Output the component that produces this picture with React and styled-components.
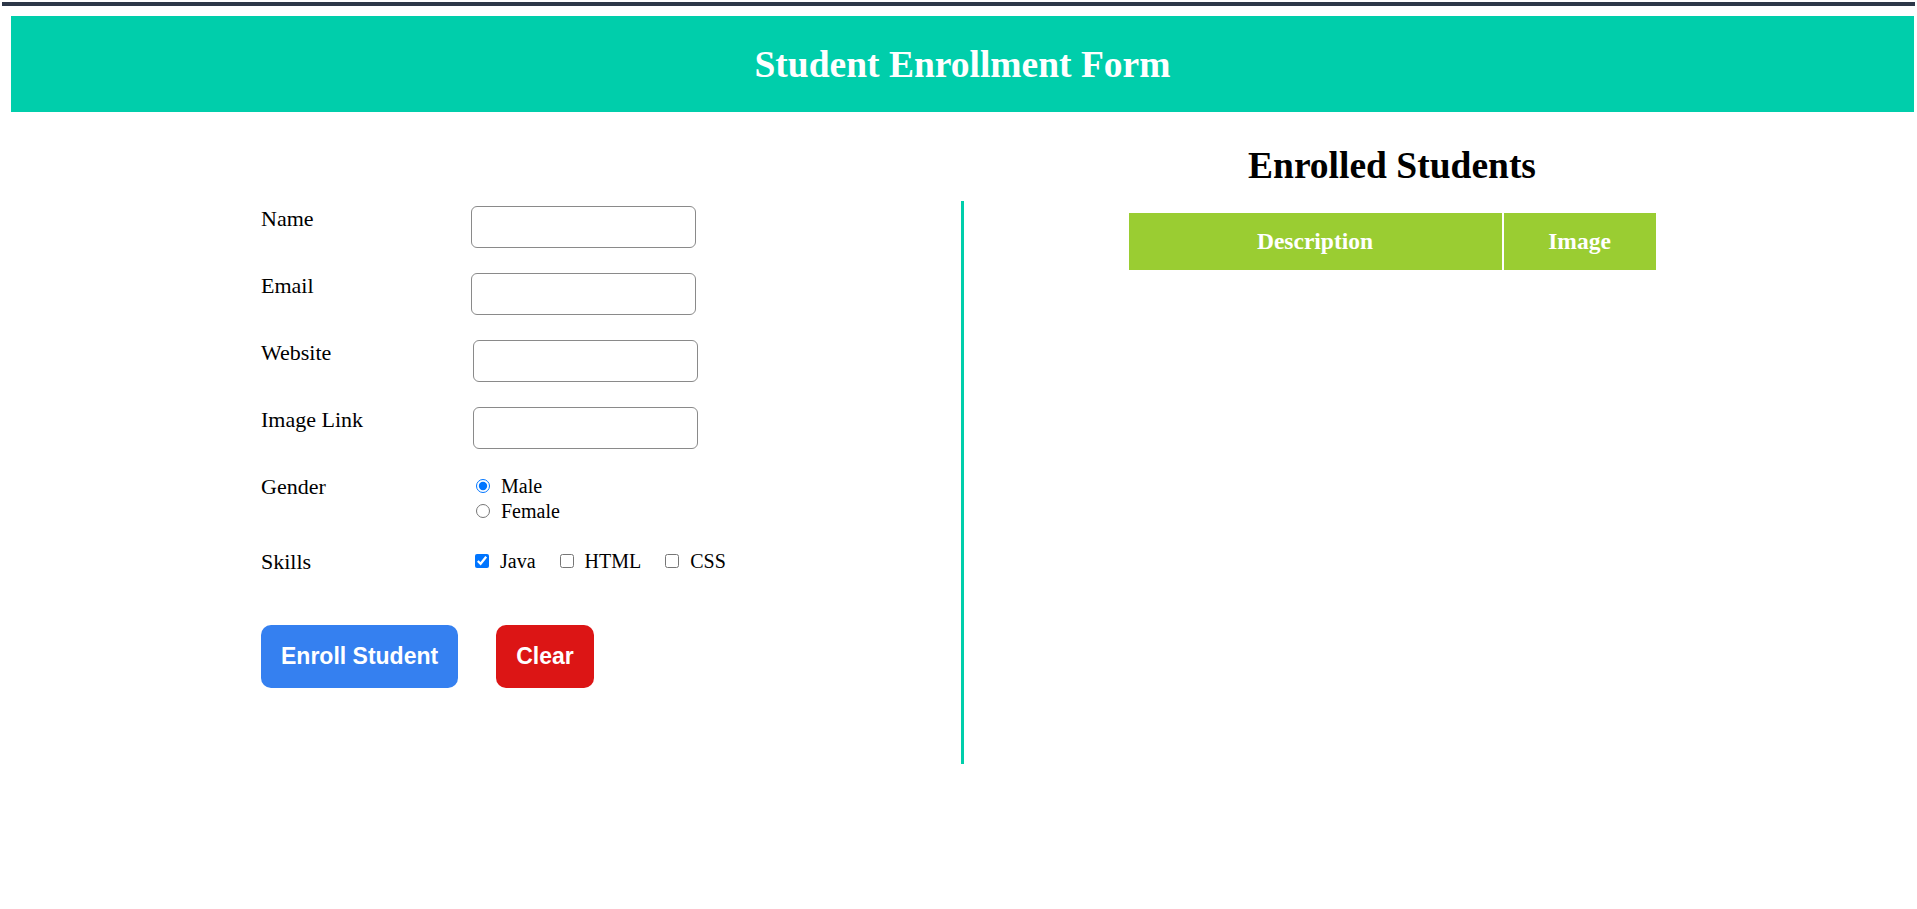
import React, { useState } from 'react'
import styled, { createGlobalStyle } from 'styled-components'

const GlobalStyle = createGlobalStyle`
  html, body {
    margin: 0;
    padding: 0;
    background: #ffffff;
    font-family: "Liberation Serif", "Times New Roman", serif;
    color: #000;
  }
`

const TopBar = styled.div`
  height: 4px;
  margin: 2px 2px 0 2px;
  background: #2d3748;
`

const Header = styled.header`
  margin: 10px 3px 0 11px;
  height: 96px;
  background: #00ceab;
  display: flex;
  align-items: center;
  justify-content: center;

  h1 {
    margin: 0;
    color: #ffffff;
    font-size: 37.5px;
    font-weight: 700;
  }
`

const Main = styled.main`
  display: flex;
  margin: 0 3px 0 11px;
`

const FormPanel = styled.section`
  width: 953px;
  flex-shrink: 0;
  margin-top: 89px;
  padding: 5px 0 76px 250px;
  box-sizing: border-box;
  border-right: 3px solid #00ceab;
  display: flex;
  flex-direction: column;
  gap: 25px;
`

const Row = styled.div`
  display: flex;
  align-items: flex-start;
`

const Label = styled.label`
  width: 210px;
  flex-shrink: 0;
  font-size: 22px;
`

const TextInput = styled.input`
  width: 225px;
  height: 42px;
  box-sizing: border-box;
  margin: 0 0 0 ${(p) => p.$shift || 0}px;
  border: 1px solid #8a8a8a;
  border-radius: 6px;
  padding: 4px 8px;
  font-size: 16px;
  outline: none;
`

const OptionStack = styled.div`
  display: flex;
  flex-direction: column;
`

const OptionLine = styled.div`
  display: flex;
  gap: 20px;
`

const Option = styled.label`
  display: block;
  font-size: 20px;
  line-height: 25px;

  input {
    width: 14px;
    height: 14px;
    margin: ${(p) => (p.$radio ? '3px 11px 0 5px' : '3px 11px 3px 4px')};
    accent-color: #0075ff;
  }
`

const Actions = styled.div`
  display: flex;
  gap: 38px;
  margin-top: 25px;
`

const Button = styled.button`
  height: 63px;
  padding: 0 20px;
  border: none;
  border-radius: 10px;
  background: ${(p) => (p.$danger ? '#dc1515' : '#3580f0')};
  color: #ffffff;
  font-family: "Liberation Sans", Arial, sans-serif;
  font-weight: 700;
  font-size: 23px;
  cursor: pointer;
`

const ListPanel = styled.section`
  flex: 1;
  padding-right: 94px;
  display: flex;
  flex-direction: column;
  align-items: center;

  h2 {
    margin: 32px 0 0;
    font-size: 37.5px;
    font-weight: 700;
  }
`

const Table = styled.table`
  margin-top: 26px;
  width: 527px;
  border-collapse: collapse;

  th {
    height: 57px;
    padding: 0;
    background: #9acd32;
    color: #ffffff;
    font-size: 23.5px;
    font-weight: 700;
  }

  th:first-child {
    width: 373px;
    border-right: 2px solid #ffffff;
  }
`

const fields = [
  { label: 'Name', shift: 0 },
  { label: 'Email', shift: 0 },
  { label: 'Website', shift: 2 },
  { label: 'Image Link', shift: 2 },
]

export default function App() {
  const [gender, setGender] = useState('male')
  const [skills, setSkills] = useState({ Java: true, HTML: false, CSS: false })

  return (
    <>
      <GlobalStyle />
      <TopBar />
      <Header>
        <h1>Student Enrollment Form</h1>
      </Header>
      <Main>
        <FormPanel>
          {fields.map((f) => (
            <Row key={f.label}>
              <Label>{f.label}</Label>
              <TextInput type="text" $shift={f.shift} />
            </Row>
          ))}
          <Row>
            <Label>Gender</Label>
            <OptionStack>
              <Option $radio>
                <input type="radio" checked={gender === 'male'} onChange={() => setGender('male')} />
                Male
              </Option>
              <Option $radio>
                <input type="radio" checked={gender === 'female'} onChange={() => setGender('female')} />
                Female
              </Option>
            </OptionStack>
          </Row>
          <Row>
            <Label>Skills</Label>
            <OptionLine>
              {Object.keys(skills).map((s) => (
                <Option key={s}>
                  <input
                    type="checkbox"
                    checked={skills[s]}
                    onChange={() => setSkills({ ...skills, [s]: !skills[s] })}
                  />
                  {s}
                </Option>
              ))}
            </OptionLine>
          </Row>
          <Actions>
            <Button>Enroll Student</Button>
            <Button $danger>Clear</Button>
          </Actions>
        </FormPanel>
        <ListPanel>
          <h2>Enrolled Students</h2>
          <Table>
            <thead>
              <tr>
                <th>Description</th>
                <th>Image</th>
              </tr>
            </thead>
          </Table>
        </ListPanel>
      </Main>
    </>
  )
}
